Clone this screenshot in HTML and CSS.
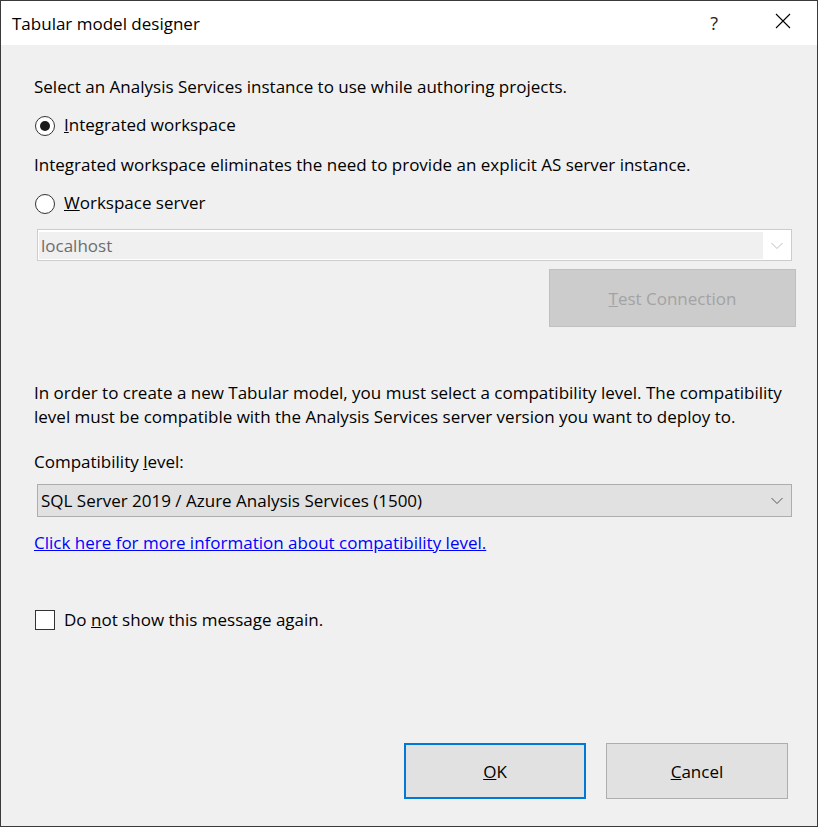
FILE: index.html
```html
<!DOCTYPE html>
<html lang="en">
<head>
    <meta charset="UTF-8">
    <title>Tabular model designer</title>
    <link rel="stylesheet" href="styles.css">
</head>
<body>
    <div class="window">
        <div class="titlebar">
            <span class="title">Tabular model designer</span>
            <span class="help">?</span>
            <svg class="close" width="16" height="16" viewBox="0 0 16 16">
                <path d="M1 1 L15 15 M15 1 L1 15" stroke="#000" stroke-width="1.1" fill="none"/>
            </svg>
        </div>

        <div class="content">
            <div class="text line1">Select an Analysis Services instance to use while authoring projects.</div>

            <label class="option opt1">
                <span class="radio checked"></span>
                <span><u>I</u>ntegrated workspace</span>
            </label>

            <div class="text line3">Integrated workspace eliminates the need to provide an explicit AS server instance.</div>

            <label class="option opt2">
                <span class="radio"></span>
                <span><u>W</u>orkspace server</span>
            </label>

            <div class="combo disabled">
                <div class="combo-value">localhost</div>
                <div class="combo-arrow">
                    <svg width="12" height="8" viewBox="0 0 12 8"><path d="M0.5 1 L6 6.5 L11.5 1" stroke="#bdbdbd" fill="none"/></svg>
                </div>
            </div>

            <div class="test-row">
                <button class="btn test" disabled><u>T</u>est Connection</button>
            </div>

            <div class="text para">In order to create a new Tabular model, you must select a compatibility level. The compatibility level must be compatible with the Analysis Services server version you want to deploy to.</div>

            <div class="text label">Compatibility <u>l</u>evel:</div>

            <div class="combo level">
                <div class="combo-value">SQL Server 2019 / Azure Analysis Services (1500)</div>
                <div class="combo-arrow">
                    <svg width="12" height="8" viewBox="0 0 12 8"><path d="M0.5 1 L6 6.5 L11.5 1" stroke="#555" fill="none"/></svg>
                </div>
            </div>

            <div class="text linkline"><a href="#">Click here for more information about compatibility level.</a></div>

            <label class="option check-row">
                <span class="checkbox"></span>
                <span>Do <u>n</u>ot show this message again.</span>
            </label>

            <div class="footer">
                <button class="btn ok"><u>O</u>K</button>
                <button class="btn cancel"><u>C</u>ancel</button>
            </div>
        </div>
    </div>
</body>
</html>
```

FILE: styles.css
```css
html, body {
    margin: 0;
    padding: 0;
}
body {
    font-family: "Open Sans", "Noto Sans", sans-serif;
    font-size: 17px;
    color: #000;
    background: #f0f0f0;
}
.window {
    box-sizing: border-box;
    width: 818px;
    height: 827px;
    border: 1px solid #3a3a3a;
    background: #f0f0f0;
    display: flex;
    flex-direction: column;
}
.titlebar {
    height: 44px;
    background: #fff;
    display: flex;
    align-items: center;
    padding-left: 11px;
}
.title {
    flex: 1;
    font-size: 17px;
    margin-top: 1px;
}
.help {
    font-size: 18px;
    color: #222;
    margin-right: 57px;
    margin-top: -1px;
}
.close {
    margin-right: 26px;
    margin-top: -4px;
}
.content {
    flex: 1;
    display: flex;
    flex-direction: column;
    padding: 30px 22px 27px 33px;
}
.text {
    line-height: 24px;
}
.option {
    display: flex;
    align-items: center;
    height: 24px;
    line-height: 24px;
}
.opt1 { margin-top: 14px; }
.line3 { margin-top: 16px; }
.opt2 { margin-top: 14px; }
.radio {
    box-sizing: border-box;
    width: 20px;
    height: 20px;
    border: 1px solid #333;
    border-radius: 50%;
    background: #fff;
    margin: 2px 9px 0 1px;
    display: flex;
    align-items: center;
    justify-content: center;
}
.radio.checked::after {
    content: "";
    width: 10px;
    height: 10px;
    border-radius: 50%;
    background: #1a1a1a;
}
.checkbox {
    box-sizing: border-box;
    width: 20px;
    height: 20px;
    border: 1px solid #333;
    background: #fff;
    margin: 0 9px 0 1px;
}
.combo {
    box-sizing: border-box;
    height: 32px;
    margin-left: 3px;
    margin-right: 3px;
    display: flex;
    align-items: stretch;
}
.combo-value {
    flex: 1;
    line-height: 28px;
    padding-left: 2px;
    white-space: nowrap;
}
.combo-arrow {
    width: 28px;
    display: flex;
    align-items: center;
    justify-content: center;
}
.combo.disabled {
    margin-top: 14px;
    border: 1px solid #cccccc;
    background: #fff;
    padding: 2px 0 1px 1px;
}
.combo.disabled .combo-value {
    background: #f0f0f0;
    color: #6d6d6d;
}
.combo.level {
    margin-top: 10px;
    height: 33px;
    border: 1px solid #adadad;
    background: #e1e1e1;
    padding-left: 1px;
}
.combo.level .combo-value {
    line-height: 30px;
    padding-top: 1px;
}
.test-row {
    display: flex;
    justify-content: flex-end;
    margin-top: 8px;
    margin-right: -1px;
}
.btn {
    font-family: inherit;
    font-size: 17px;
    box-sizing: border-box;
    padding: 0;
    cursor: default;
}
.test {
    width: 247px;
    height: 58px;
    background: #cccccc;
    border: 1px solid #bfbfbf;
    color: #a3a3a3;
}
.para { margin-top: 54px; }
.label { margin-top: 21px; }
.linkline { margin-top: 14px; }
a {
    color: #0000ff;
}
.check-row { margin-top: 53px; }
.footer {
    margin-top: auto;
    display: flex;
    justify-content: flex-end;
    gap: 20px;
    padding-right: 7px;
}
.ok, .cancel {
    width: 182px;
    height: 56px;
    background: #e1e1e1;
    color: #000;
}
.ok {
    border: 2px solid #0078d7;
}
.cancel {
    border: 1px solid #adadad;
}
```
